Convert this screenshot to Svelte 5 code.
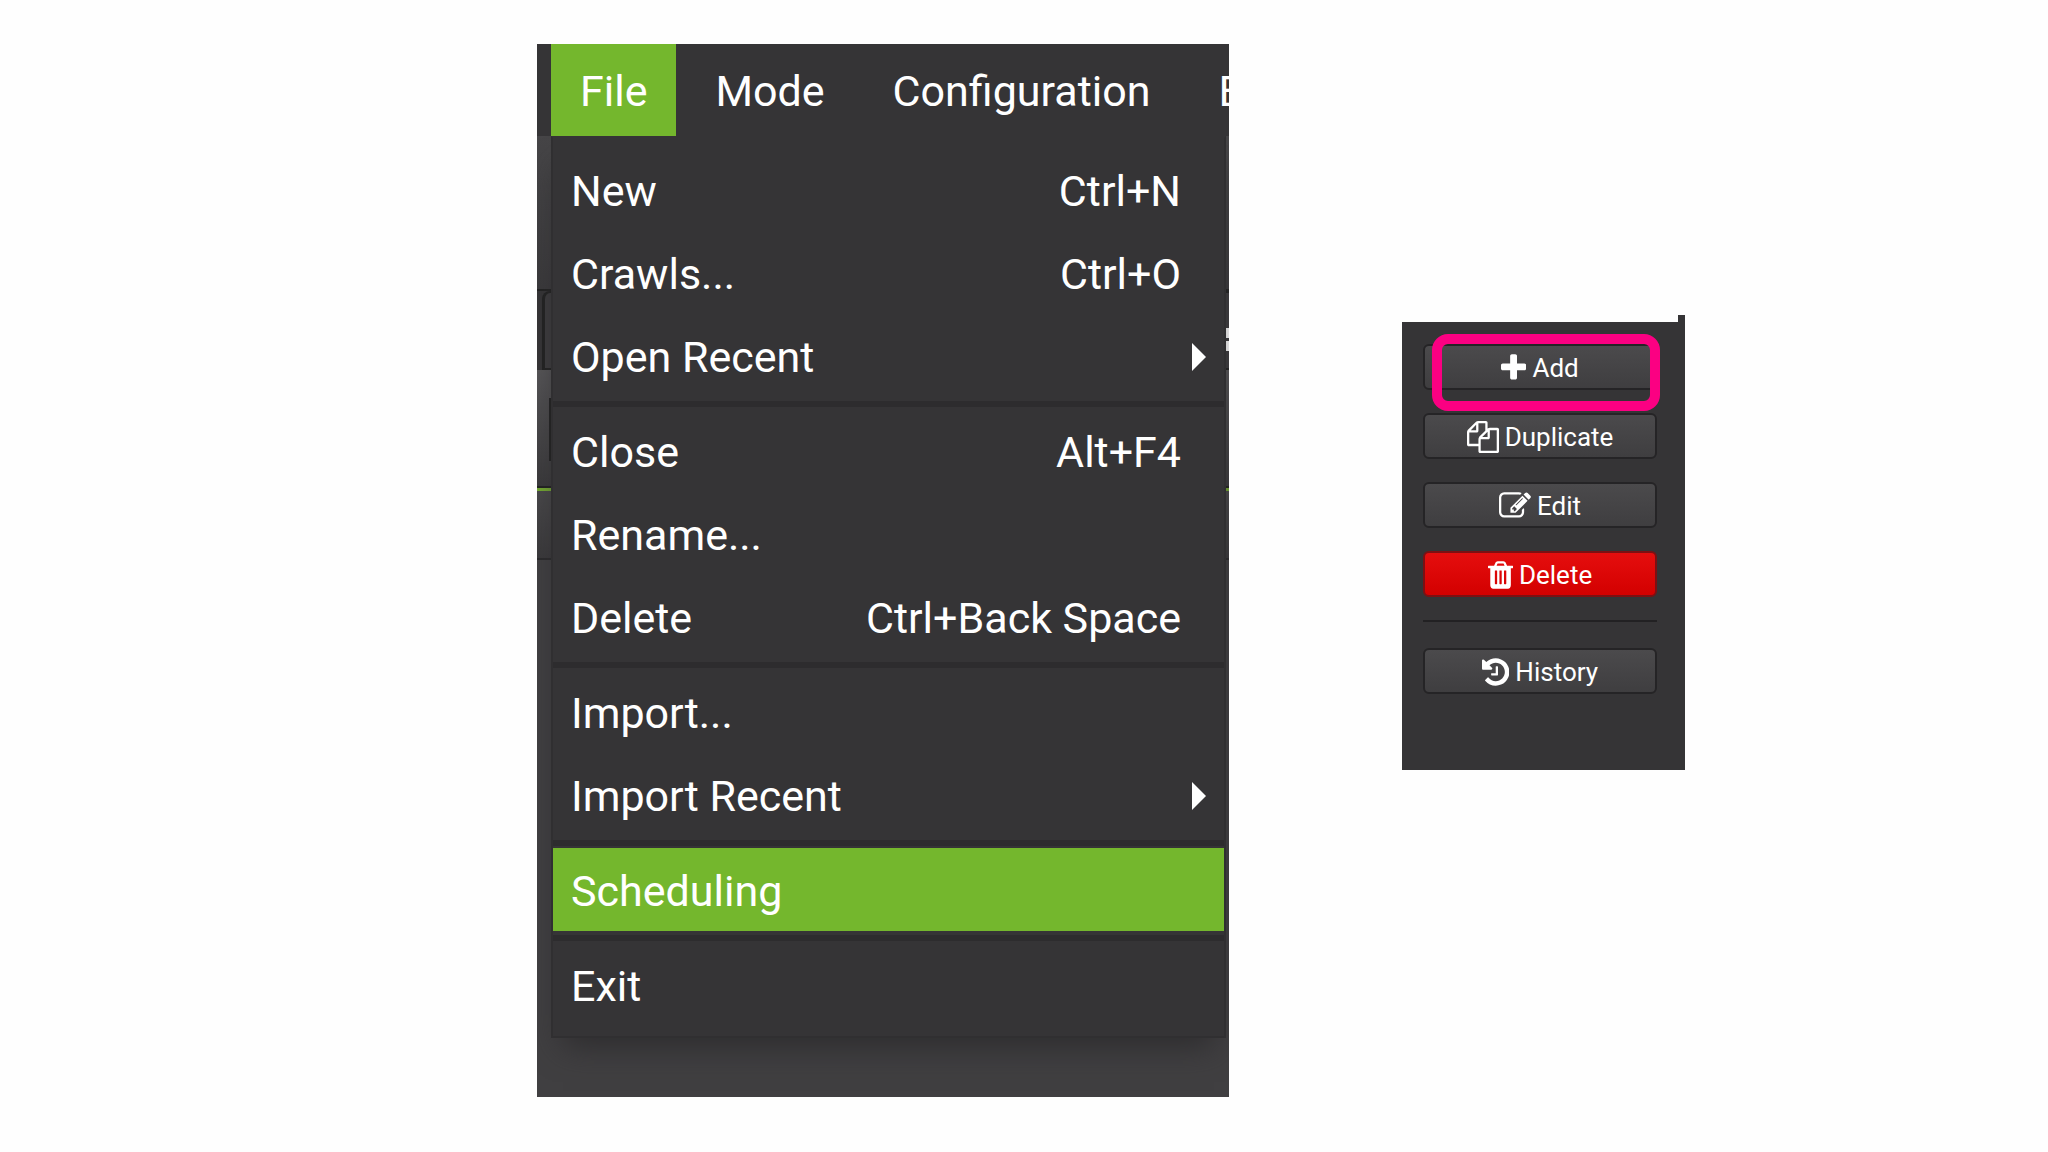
<script>
  const tabs = ['File', 'Mode', 'Configuration', 'Bulk Export'];

  const groups = [
    [
      { label: 'New', keys: 'Ctrl+N' },
      { label: 'Crawls...', keys: 'Ctrl+O' },
      { label: 'Open Recent', submenu: true }
    ],
    [
      { label: 'Close', keys: 'Alt+F4' },
      { label: 'Rename...' },
      { label: 'Delete', keys: 'Ctrl+Back Space' }
    ],
    [{ label: 'Import...' }, { label: 'Import Recent', submenu: true }],
    [{ label: 'Scheduling', active: true }],
    [{ label: 'Exit' }]
  ];

  const icons = {
    plus: {
      box: '192 0 1408 1792',
      d: 'M1600 736v192q0 40-28 68t-68 28h-416v416q0 40-28 68t-68 28h-192q-40 0-68-28t-28-68v-416h-416q-40 0-68-28t-28-68v-192q0-40 28-68t68-28h416v-416q0-40 28-68t68-28h192q40 0 68 28t28 68v416h416q40 0 68 28t28 68z'
    },
    copy: {
      box: '0 0 1792 1792',
      d: 'M1696 384q40 0 68 28t28 68v1216q0 40-28 68t-68 28h-960q-40 0-68-28t-28-68v-288h-544q-40 0-68-28t-28-68v-672q0-40 20-88t48-76l408-408q28-28 76-48t88-20h416q40 0 68 28t28 68v328q68-40 128-40h416zm-544 213l-299 299h299v-299zm-640-384l-299 299h299v-299zm196 647l316-316v-416h-384v416q0 40-28 68t-68 28h-416v640h512v-256q0-40 20-88t48-76zm956 804v-1152h-384v416q0 40-28 68t-68 28h-416v640h896z'
    },
    edit: {
      box: '0 0 1792 1792',
      d: 'M888 1184l116-116-152-152-116 116v56h96v96h56zm440-720q-16-16-33 1l-350 350q-17 17-1 33t33-1l350-350q17-17 1-33zm80 594v190q0 119-84.500 203.500t-203.500 84.500h-832q-119 0-203.500-84.500t-84.500-203.500v-832q0-119 84.500-203.500t203.500-84.500h832q63 0 117 25 15 7 18 23 3 17-9 29l-49 49q-14 14-32 8-23-6-45-6h-832q-66 0-113 47t-47 113v832q0 66 47 113t113 47h832q66 0 113-47t47-113v-126q0-13 9-22l64-64q15-15 35-7t20 29zm-96-738l288 288-672 672h-288v-288zm444 132l-92 92-288-288 92-92q28-28 68-28t68 28l152 152q28 28 28 68t-28 68z'
    },
    trash: {
      box: '192 0 1408 1792',
      d: 'M704 1376v-704q0-14-9-23t-23-9h-64q-14 0-23 9t-9 23v704q0 14 9 23t23 9h64q14 0 23-9t9-23zm256 0v-704q0-14-9-23t-23-9h-64q-14 0-23 9t-9 23v704q0 14 9 23t23 9h64q14 0 23-9t9-23zm256 0v-704q0-14-9-23t-23-9h-64q-14 0-23 9t-9 23v704q0 14 9 23t23 9h64q14 0 23-9t9-23zm-544-992h448l-48-117q-7-9-17-11h-317q-10 2-17 11zm928 32v64q0 14-9 23t-23 9h-96v948q0 83-47 143.500t-113 60.500h-832q-66 0-113-58.500t-47-141.500v-952h-96q-14 0-23-9t-9-23v-64q0-14 9-23t23-9h309l70-167q15-37 54-63t79-26h320q40 0 79 26t54 63l70 167h309q14 0 23 9t9 23z'
    },
    history: {
      box: '128 0 1536 1792',
      d: 'M1664 896q0 156-61 298t-164 245-245 164-298 61q-172 0-327-72.500t-264-204.500q-7-10-6.500-22.500t8.500-20.500l137-138q10-9 25-9 16 2 23 12 73 95 179 147t225 52q104 0 198.500-40.500t163.500-109.500 109.500-163.500 40.500-198.500-40.500-198.500-109.500-163.500-163.500-109.500-198.500-40.500q-98 0-188 35.500t-160 101.500l137 138q31 30 14 69-17 40-59 40h-448q-26 0-45-19t-19-45v-448q0-42 40-59 39-17 69 14l130 129q107-101 244.500-156.500t284.500-55.500q156 0 298 61t245 164 164 245 61 298zm-640-288v448q0 14-9 23t-23 9h-320q-14 0-23-9t-9-23v-64q0-14 9-23t23-9h224v-352q0-14 9-23t23-9h64q14 0 23 9t9 23z'
    }
  };

  const actions = [
    { label: 'Add', icon: 'plus', marked: true },
    { label: 'Duplicate', icon: 'copy' },
    { label: 'Edit', icon: 'edit' },
    { label: 'Delete', icon: 'trash', danger: true },
    { label: 'History', icon: 'history', ruled: true }
  ];
</script>

<main>
  <section class="window">
    <nav class="menubar">
      {#each tabs as tab, i}
        <button class="tab" class:open={i === 0}>{tab}</button>
      {/each}
    </nav>
    <div class="workspace">
      <div class="backdrop" aria-hidden="true">
        <div class="toolbar"></div>
        <div class="tabstrip"><div class="mark"></div></div>
        <div class="filters"><div class="field"></div></div>
        <div class="header"></div>
        <div class="content"></div>
      </div>
      <div class="menu" role="menu">
        {#each groups as group}
          <div class="group" role="group">
            {#each group as item}
              <button class="item" class:active={item.active} role="menuitem">
                <span>{item.label}</span>
                {#if item.keys}<span>{item.keys}</span>{/if}
                {#if item.submenu}
                  <svg class="arrow" viewBox="0 0 14 28" aria-hidden="true"><path d="M0 0L14 14L0 28z" /></svg>
                {/if}
              </button>
            {/each}
          </div>
        {/each}
      </div>
    </div>
  </section>

  <aside class="panel">
    {#each actions as action}
      {#if action.ruled}<hr />{/if}
      <div class="slot">
        <button class="action" class:danger={action.danger}>
          <svg class="icon" viewBox={icons[action.icon].box} aria-hidden="true"><path d={icons[action.icon].d} /></svg>
          <span>{action.label}</span>
        </button>
        {#if action.marked}<div class="marker"></div>{/if}
      </div>
    {/each}
  </aside>
</main>

<style>
  :global(body) {
    background: #fefefe;
  }

  main {
    display: grid;
    grid-template-columns: 537fr 692fr 173fr 283fr 363fr;
    align-items: start;
    box-sizing: border-box;
    min-height: 100vh;
    padding: 44px 0;
    font-family: Roboto, 'Liberation Sans', sans-serif;
    color: #fff;
  }

  button {
    margin: 0;
    padding: 0;
    border: 0;
    background: none;
    color: inherit;
    font: inherit;
    cursor: pointer;
  }

  .window {
    grid-column: 2;
    min-width: 0;
    overflow: hidden;
    background: #353436;
    font-size: 43px;
  }

  .menubar {
    position: relative;
    z-index: 1;
    display: flex;
    gap: 10px;
    height: 92px;
    padding-left: 14px;
    background: #353436;
  }

  .tab {
    flex: none;
    padding: 2px 29px 0;
    white-space: nowrap;
  }

  .tab.open {
    background: #74b72d;
  }

  .workspace {
    position: relative;
    padding: 0 3px 59px 14px;
  }

  .backdrop {
    position: absolute;
    inset: 0;
    display: flex;
    flex-direction: column;
  }

  .toolbar {
    height: 153px;
    border-bottom: 2px solid #222;
    background: linear-gradient(#464547, #3a393b);
  }

  .tabstrip {
    display: flex;
    align-items: center;
    justify-content: flex-end;
    height: 75px;
    margin-left: 5px;
    border: 2px solid #222;
    border-width: 2px 0 2px 3px;
    border-radius: 8px 0 0 0;
    background: #3c3b3d;
  }

  .mark {
    width: 3px;
    height: 3px;
    margin-top: 18px;
    border: solid #fff;
    border-width: 10px 0;
  }

  .filters {
    display: flow-root;
    height: 116px;
    border-bottom: 2px solid #222;
    background: linear-gradient(#555456, #3a393b);
  }

  .field {
    height: 63px;
    margin: 28px 3px 0 12px;
    background: #222;
  }

  .header {
    height: 67px;
    border-top: 3px solid #74a832;
    border-bottom: 2px solid #2b2a2c;
    background: linear-gradient(#484749, #3a393b);
  }

  .content {
    flex: 1;
    background: #403f41;
  }

  .menu {
    position: relative;
    padding: 10px 0;
    border: 2px solid #302f31;
    border-top-color: #353436;
    background: #353436;
    box-shadow: 0 20px 30px -12px #2d2c2e;
  }

  .group + .group {
    margin-top: 4px;
    padding-top: 2px;
    border-top: 6px solid #2d2c2e;
  }

  .item {
    display: flex;
    align-items: center;
    justify-content: space-between;
    box-sizing: border-box;
    width: 100%;
    height: 83px;
    padding: 2px 43px 0 18px;
    white-space: nowrap;
  }

  .item.active {
    background: #74b72d;
  }

  .arrow {
    width: 14px;
    height: 28px;
    margin-right: -25px;
    fill: #fff;
  }

  .panel {
    grid-column: 4;
    position: relative;
    display: flex;
    flex-direction: column;
    gap: 23px;
    box-sizing: border-box;
    margin-top: 278px;
    padding: 22px 28px 76px 21px;
    background: #353436;
    font-size: 26px;
  }

  /* Corner of the neighbouring frame that rises above the panel. */
  .panel::before {
    content: '';
    position: absolute;
    top: -7px;
    right: 0;
    width: 7px;
    height: 7px;
    background: #353436;
  }

  .slot {
    position: relative;
  }

  .action {
    display: flex;
    align-items: center;
    justify-content: center;
    gap: 6px;
    box-sizing: border-box;
    width: 100%;
    height: 46px;
    padding-top: 1px;
    border: 2px solid #252426;
    border-radius: 6px;
    background: linear-gradient(#4b4a4c, #3f3e40);
  }

  .action.danger {
    border-color: #7d1013;
    background: linear-gradient(#e50e0e, #d30000);
  }

  .icon {
    height: 32px;
    fill: #fff;
  }

  .marker {
    position: absolute;
    inset: -10px -3px -21px 9px;
    border: 10px solid #fb0082;
    border-radius: 16px;
    pointer-events: none;
  }

  hr {
    width: 100%;
    height: 2px;
    margin: 0 0 3px;
    border: 0;
    background: #222123;
  }
</style>
